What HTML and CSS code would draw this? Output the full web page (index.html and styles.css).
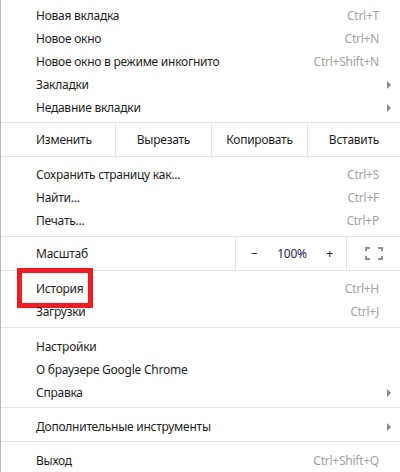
FILE: index.html
```html
<!DOCTYPE html>
<html lang="ru">
<head>
<meta charset="utf-8">
<link rel="stylesheet" href="styles.css">
</head>
<body>
<div class="menu">
  <div class="group first">
    <div class="item"><span class="label">Новая вкладка</span><span class="key">Ctrl+T</span></div>
    <div class="item"><span class="label">Новое окно</span><span class="key">Ctrl+N</span></div>
    <div class="item"><span class="label">Новое окно в режиме инкогнито</span><span class="key">Ctrl+Shift+N</span></div>
    <div class="item"><span class="label">Закладки</span><span class="arrow"></span></div>
    <div class="item"><span class="label">Недавние вкладки</span><span class="arrow"></span></div>
  </div>
  <div class="edit-row">
    <div class="cell cell-label">Изменить</div>
    <div class="cell btn">Вырезать</div>
    <div class="cell btn">Копировать</div>
    <div class="cell btn">Вставить</div>
  </div>
  <div class="group after-row">
    <div class="item"><span class="label">Сохранить страницу как...</span><span class="key">Ctrl+S</span></div>
    <div class="item"><span class="label">Найти...</span><span class="key">Ctrl+F</span></div>
    <div class="item"><span class="label">Печать...</span><span class="key">Ctrl+P</span></div>
  </div>
  <div class="zoom-row">
    <div class="cell cell-label zoom-label">Масштаб</div>
    <div class="cell zoom-ctrl"><span class="zbtn">−</span><span class="zval">100%</span><span class="zbtn">+</span></div>
    <div class="cell full">
      <svg width="18" height="13" viewBox="0 0 18 13" fill="#8f8f8f" aria-hidden="true">
        <rect x="0" y="0" width="5" height="2"/><rect x="0" y="0" width="2" height="4"/>
        <rect x="13" y="0" width="5" height="2"/><rect x="16" y="0" width="2" height="4"/>
        <rect x="0" y="11" width="5" height="2"/><rect x="0" y="9" width="2" height="4"/>
        <rect x="13" y="11" width="5" height="2"/><rect x="16" y="9" width="2" height="4"/>
      </svg>
    </div>
  </div>
  <div class="group after-row">
    <div class="item"><span class="label highlight">История</span><span class="key">Ctrl+H</span></div>
    <div class="item"><span class="label">Загрузки</span><span class="key">Ctrl+J</span></div>
  </div>
  <div class="sep"></div>
  <div class="group">
    <div class="item"><span class="label">Настройки</span></div>
    <div class="item"><span class="label">О браузере Google Chrome</span></div>
    <div class="item"><span class="label">Справка</span><span class="arrow"></span></div>
  </div>
  <div class="sep"></div>
  <div class="group">
    <div class="item"><span class="label">Дополнительные инструменты</span><span class="arrow"></span></div>
  </div>
  <div class="sep"></div>
  <div class="group">
    <div class="item"><span class="label">Выход</span><span class="key">Ctrl+Shift+Q</span></div>
  </div>
</div>
</body>
</html>
```
FILE: styles.css
```css
html, body {
  margin: 0;
  padding: 0;
  background: #ffffff;
}
body {
  font-family: "Noto Sans", "Open Sans", sans-serif;
  font-size: 12px;
  letter-spacing: -0.25px;
  color: #1e1e1e;
}
.menu {
  width: 399px;
  height: 472px;
  border-left: 1px solid #b9b9b9;
  overflow: hidden;
}
.group.first {
  padding-top: 4px;
}
.group {
  padding-bottom: 3px;
}
.group.after-row {
  padding-top: 6px;
  padding-bottom: 4px;
}
.item {
  height: 23px;
  display: flex;
  align-items: center;
  padding-left: 35px;
  padding-right: 21px;
}
.label {
  flex: 1;
  position: relative;
}
.key {
  color: #a3a3a3;
}
.arrow {
  width: 0;
  height: 0;
  border-top: 4px solid transparent;
  border-bottom: 4px solid transparent;
  border-left: 4px solid #8a8a8a;
  margin-right: -12px;
}
.sep {
  height: 1px;
  background: #e3e3e3;
  margin-bottom: 7px;
}
.edit-row, .zoom-row {
  height: 33px;
  display: flex;
  border-top: 1px solid #e3e3e3;
  border-bottom: 1px solid #e3e3e3;
}
.cell {
  display: flex;
  align-items: center;
  justify-content: center;
}
.cell-label {
  justify-content: flex-start;
  padding-left: 35px;
  width: 79px;
}
.btn {
  border-left: 1px solid #e3e3e3;
  width: 95px;
}
.btn:last-child {
  flex: 1;
}
.zoom-label {
  width: 199px;
}
.zoom-ctrl {
  width: 111px;
  border-left: 1px solid #e3e3e3;
  justify-content: space-between;
  padding: 0 13px 0 15px;
  box-sizing: border-box;
}
.zval {
  color: #2a2450;
}
.full {
  flex: 1;
  border-left: 1px solid #e3e3e3;
}
.highlight::after {
  content: "";
  position: absolute;
  left: -19px;
  top: -12px;
  width: 76px;
  height: 40px;
  border: 5px solid #ee1c25;
  box-sizing: border-box;
}
```
